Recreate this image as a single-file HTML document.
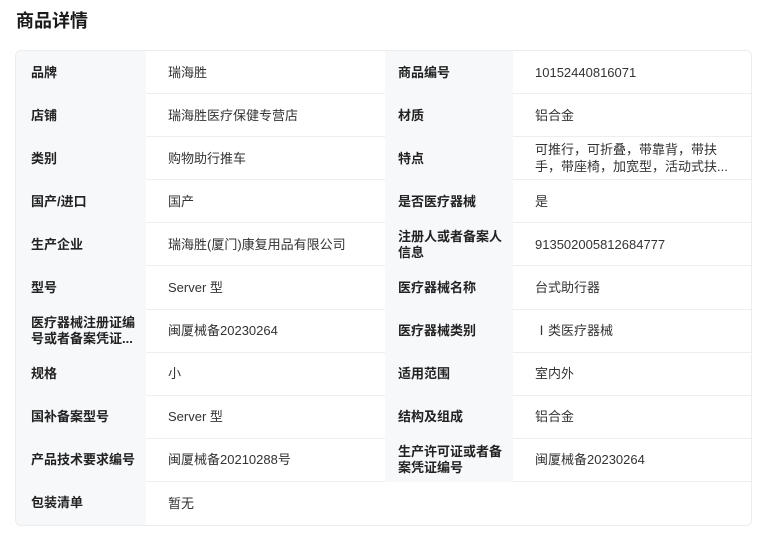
<!DOCTYPE html>
<html><head><meta charset="utf-8"><style>
*{margin:0;padding:0;box-sizing:border-box}
body{width:766px;height:542px;background:#fff;font-family:"Liberation Sans","Noto Sans CJK SC",sans-serif;color:#222;position:relative;overflow:hidden}
h1{position:absolute;left:16px;top:9px;font-size:18px;font-weight:bold;color:#1a1a1a;line-height:24px}
.t{position:absolute;left:15px;top:50px;width:737px;height:476px;border:1px solid #ececec;border-radius:6px;overflow:hidden;display:grid;grid-template-columns:130px 239px 128px 1fr;grid-template-rows:repeat(11,1fr)}
.l{background:#f7f8fa;font-weight:bold;font-size:13px;padding-left:15px;display:flex;align-items:center;line-height:16px;color:#222}
.l2{padding-left:13px}
.v{font-size:13px;padding-left:22px;display:flex;align-items:center;border-bottom:1px solid #eeeeee;color:#333;line-height:17px}
.last{border-bottom:none}
</style></head><body>
<h1>商品详情</h1>
<div class="t">
<div class="l">品牌</div><div class="v">瑞海胜</div><div class="l l2">商品编号</div><div class="v">10152440816071</div>
<div class="l">店铺</div><div class="v">瑞海胜医疗保健专营店</div><div class="l l2">材质</div><div class="v">铝合金</div>
<div class="l">类别</div><div class="v">购物助行推车</div><div class="l l2">特点</div><div class="v">可推行，可折叠，带靠背，带扶<br>手，带座椅，加宽型，活动式扶...</div>
<div class="l">国产/进口</div><div class="v">国产</div><div class="l l2">是否医疗器械</div><div class="v">是</div>
<div class="l">生产企业</div><div class="v">瑞海胜(厦门)康复用品有限公司</div><div class="l l2">注册人或者备案人<br>信息</div><div class="v">913502005812684777</div>
<div class="l">型号</div><div class="v">Server 型</div><div class="l l2">医疗器械名称</div><div class="v">台式助行器</div>
<div class="l">医疗器械注册证编<br>号或者备案凭证...</div><div class="v">闽厦械备20230264</div><div class="l l2">医疗器械类别</div><div class="v">Ⅰ类医疗器械</div>
<div class="l">规格</div><div class="v">小</div><div class="l l2">适用范围</div><div class="v">室内外</div>
<div class="l">国补备案型号</div><div class="v">Server 型</div><div class="l l2">结构及组成</div><div class="v">铝合金</div>
<div class="l">产品技术要求编号</div><div class="v">闽厦械备20210288号</div><div class="l l2">生产许可证或者备<br>案凭证编号</div><div class="v">闽厦械备20230264</div>
<div class="l">包装清单</div><div class="v last" style="grid-column:2/5">暂无</div>
</div>
</body></html>
